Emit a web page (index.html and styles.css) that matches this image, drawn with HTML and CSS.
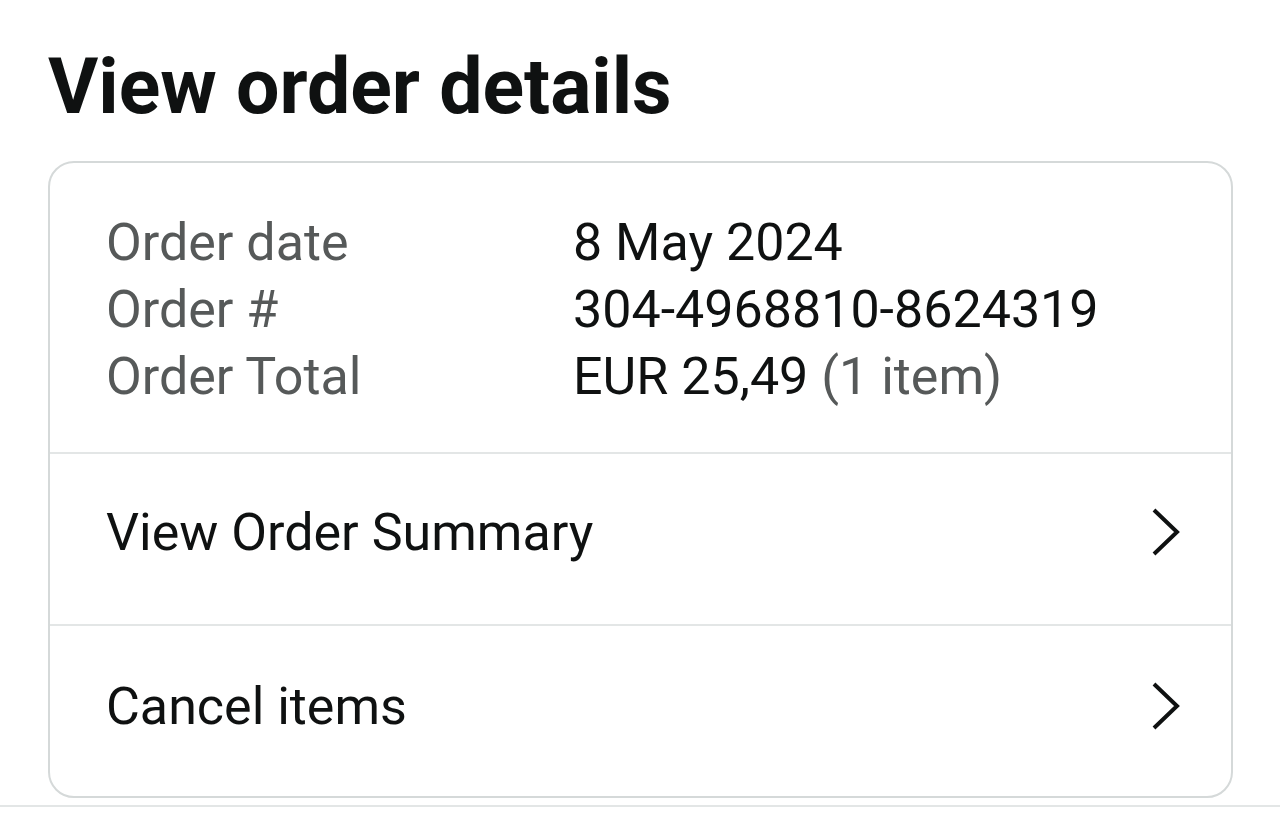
FILE: index.html
```html
<!DOCTYPE html>
<html>
<head>
<meta charset="utf-8">
<link rel="stylesheet" href="styles.css">
</head>
<body>
<main class="page">
  <h1 class="title">View order details</h1>
  <section class="card">
    <div class="info">
      <div class="label">Order date</div><div class="value">8 May 2024</div>
      <div class="label">Order #</div><div class="value">304-4968810-8624319</div>
      <div class="label">Order Total</div><div class="value">EUR 25,49 <span class="muted">(1 item)</span></div>
    </div>
    <a class="row" href="#">
      <span>View Order Summary</span>
      <svg class="chev" width="30" height="48" viewBox="0 0 30 48"><path d="M3 2 L26 24 L3 46" fill="none" stroke="#0f1111" stroke-width="4"/></svg>
    </a>
    <a class="row" href="#">
      <span>Cancel items</span>
      <svg class="chev" width="30" height="48" viewBox="0 0 30 48"><path d="M3 2 L26 24 L3 46" fill="none" stroke="#0f1111" stroke-width="4"/></svg>
    </a>
  </section>
  <div class="bottom-line"></div>
</main>
</body>
</html>
```
FILE: styles.css
```css
html, body {
  margin: 0;
  padding: 0;
  background: #ffffff;
}
.page {
  font-family: Roboto, "Noto Sans", sans-serif;
  color: #0f1111;
  padding: 0 47px 0 48px;
}
.title {
  margin: 0;
  padding-top: 42px;
  height: 161px;
  box-sizing: border-box;
  font-size: 77px;
  line-height: 90px;
  font-weight: 700;
}
.card {
  border: 2px solid #d5d9d9;
  border-radius: 26px;
  height: 637px;
  box-sizing: border-box;
}
.info {
  display: grid;
  grid-template-columns: 467px auto;
  align-content: start;
  padding: 46px 56px 0 56px;
  height: 291px;
  box-sizing: border-box;
  border-bottom: 2px solid #e3e6e6;
  font-size: 52px;
  line-height: 67px;
}
.label, .muted {
  color: #565959;
}
.value {
  color: #0f1111;
}
.row {
  display: flex;
  align-items: center;
  justify-content: space-between;
  height: 172px;
  box-sizing: border-box;
  padding: 0 50px 14px 56px;
  font-size: 52px;
  color: #0f1111;
  text-decoration: none;
  border-bottom: 2px solid #e3e6e6;
}
.row:last-child {
  border-bottom: none;
  padding-bottom: 12px;
}
.chev {
  display: block;
}
.bottom-line {
  margin: 7px -48px 0 -48px;
  height: 2px;
  background: #e3e6e6;
}
```
